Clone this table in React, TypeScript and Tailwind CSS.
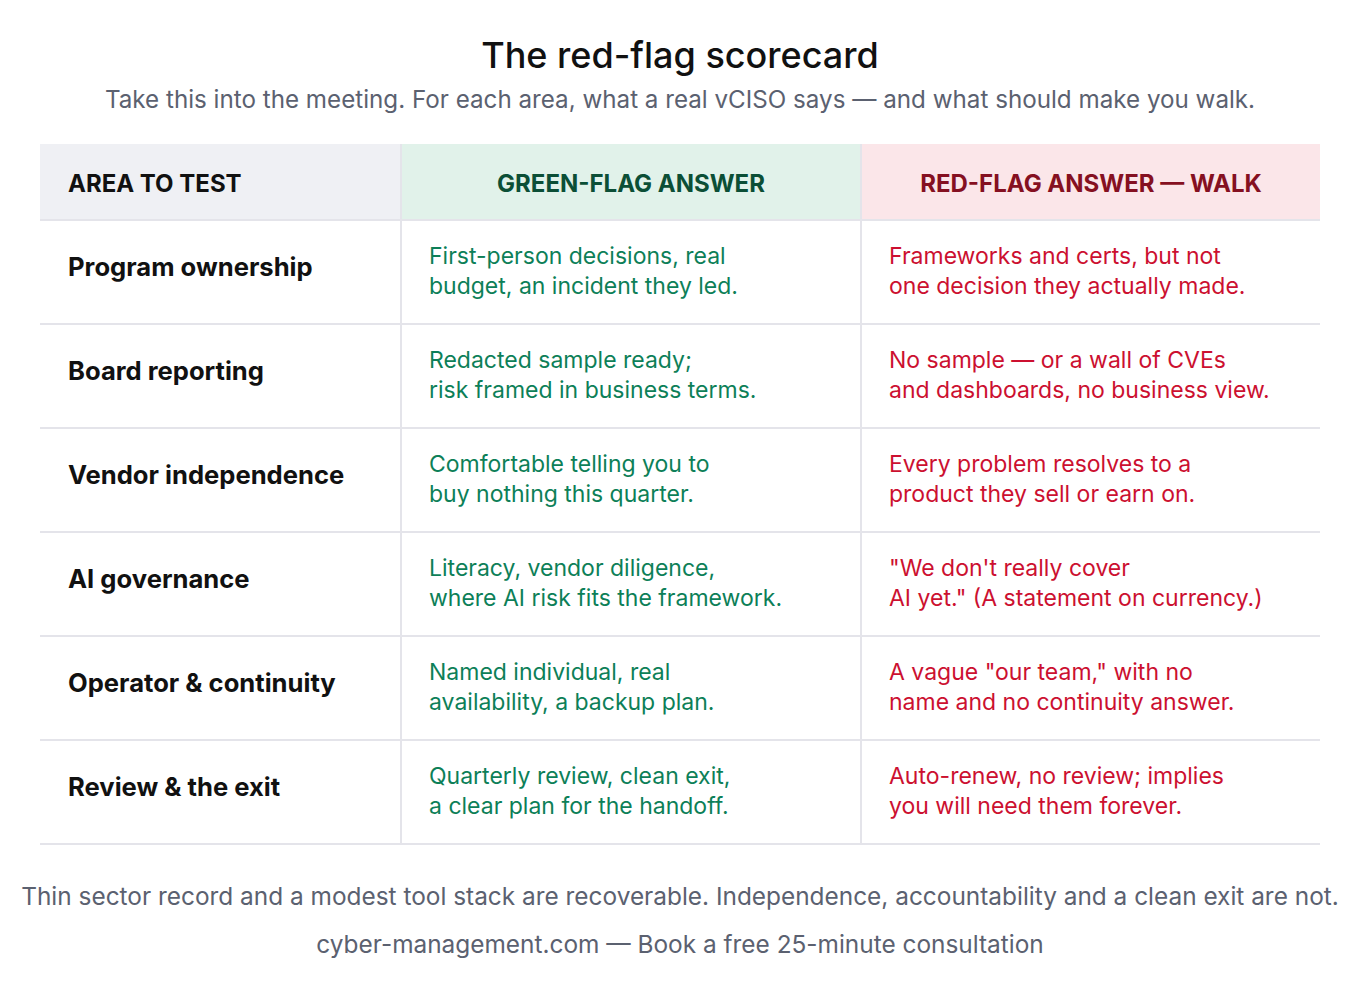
const rows = [
  {
    area: "Program ownership",
    green: ["First-person decisions, real", "budget, an incident they led."],
    red: ["Frameworks and certs, but not", "one decision they actually made."],
  },
  {
    area: "Board reporting",
    green: ["Redacted sample ready;", "risk framed in business terms."],
    red: ["No sample — or a wall of CVEs", "and dashboards, no business view."],
  },
  {
    area: "Vendor independence",
    green: ["Comfortable telling you to", "buy nothing this quarter."],
    red: ["Every problem resolves to a", "product they sell or earn on."],
  },
  {
    area: "AI governance",
    green: ["Literacy, vendor diligence,", "where AI risk fits the framework."],
    red: ["\"We don't really cover", "AI yet.\" (A statement on currency.)"],
  },
  {
    area: "Operator & continuity",
    green: ["Named individual, real", "availability, a backup plan."],
    red: ["A vague \"our team,\" with no", "name and no continuity answer."],
  },
  {
    area: "Review & the exit",
    green: ["Quarterly review, clean exit,", "a clear plan for the handoff."],
    red: ["Auto-renew, no review; implies", "you will need them forever."],
  },
];

export default function App() {
  return (
    <div className="min-h-screen bg-white font-['Inter',sans-serif]">
      <div className="pt-[33px] text-center">
        <h1 className="text-[36px] leading-[44px] font-medium text-[#111111]">The red-flag scorecard</h1>
        <p className="mt-[7px] text-[24.2px] leading-[32px] text-[#5b6170]">
          Take this into the meeting. For each area, what a real vCISO says — and what should make you walk.
        </p>
      </div>

      <div className="mx-auto mt-[28px] w-[1280px]">
        <div className="grid grid-cols-[360px_460px_460px] border-b-2 border-[#e4e4ea]">
          <div className="flex h-[75px] items-center bg-[#eff0f4] px-[28px] pt-[4px] text-[24px] font-bold text-[#111111]">
            AREA TO TEST
          </div>
          <div className="flex h-[75px] items-center justify-center border-l-2 border-[#e4e4ea] bg-[#e1f2ea] pt-[4px] text-[24px] font-bold text-[#0b4f36]">
            GREEN-FLAG ANSWER
          </div>
          <div className="flex h-[75px] items-center justify-center border-l-2 border-[#e4e4ea] bg-[#fbe6e9] pt-[4px] text-[24px] font-bold text-[#851021]">
            RED-FLAG ANSWER — WALK
          </div>
        </div>
        {rows.map((r) => (
          <div key={r.area} className="grid h-[104px] grid-cols-[360px_460px_460px] border-b-2 border-[#e4e4ea]">
            <div className="flex items-center px-[28px] pb-[10px] text-[25.6px] font-bold text-[#111111]">{r.area}</div>
            <div className="flex flex-col justify-center border-l-2 border-[#e4e4ea] px-[27px] pb-[2px] text-[23px] leading-[30px] text-[#0d7f58]">
              {r.green.map((l) => (
                <div key={l}>{l}</div>
              ))}
            </div>
            <div className="flex flex-col justify-center border-l-2 border-[#e4e4ea] px-[27px] pb-[2px] text-[23px] leading-[30px] text-[#cc1030]">
              {r.red.map((l) => (
                <div key={l}>{l}</div>
              ))}
            </div>
          </div>
        ))}
      </div>

      <div className="mt-[35px] text-center text-[24.4px] leading-[32px] text-[#5b6170]">
        <p>Thin sector record and a modest tool stack are recoverable. Independence, accountability and a clean exit are not.</p>
        <p className="mt-[16px]">cyber-management.com — Book a free 25-minute consultation</p>
      </div>
    </div>
  );
}
